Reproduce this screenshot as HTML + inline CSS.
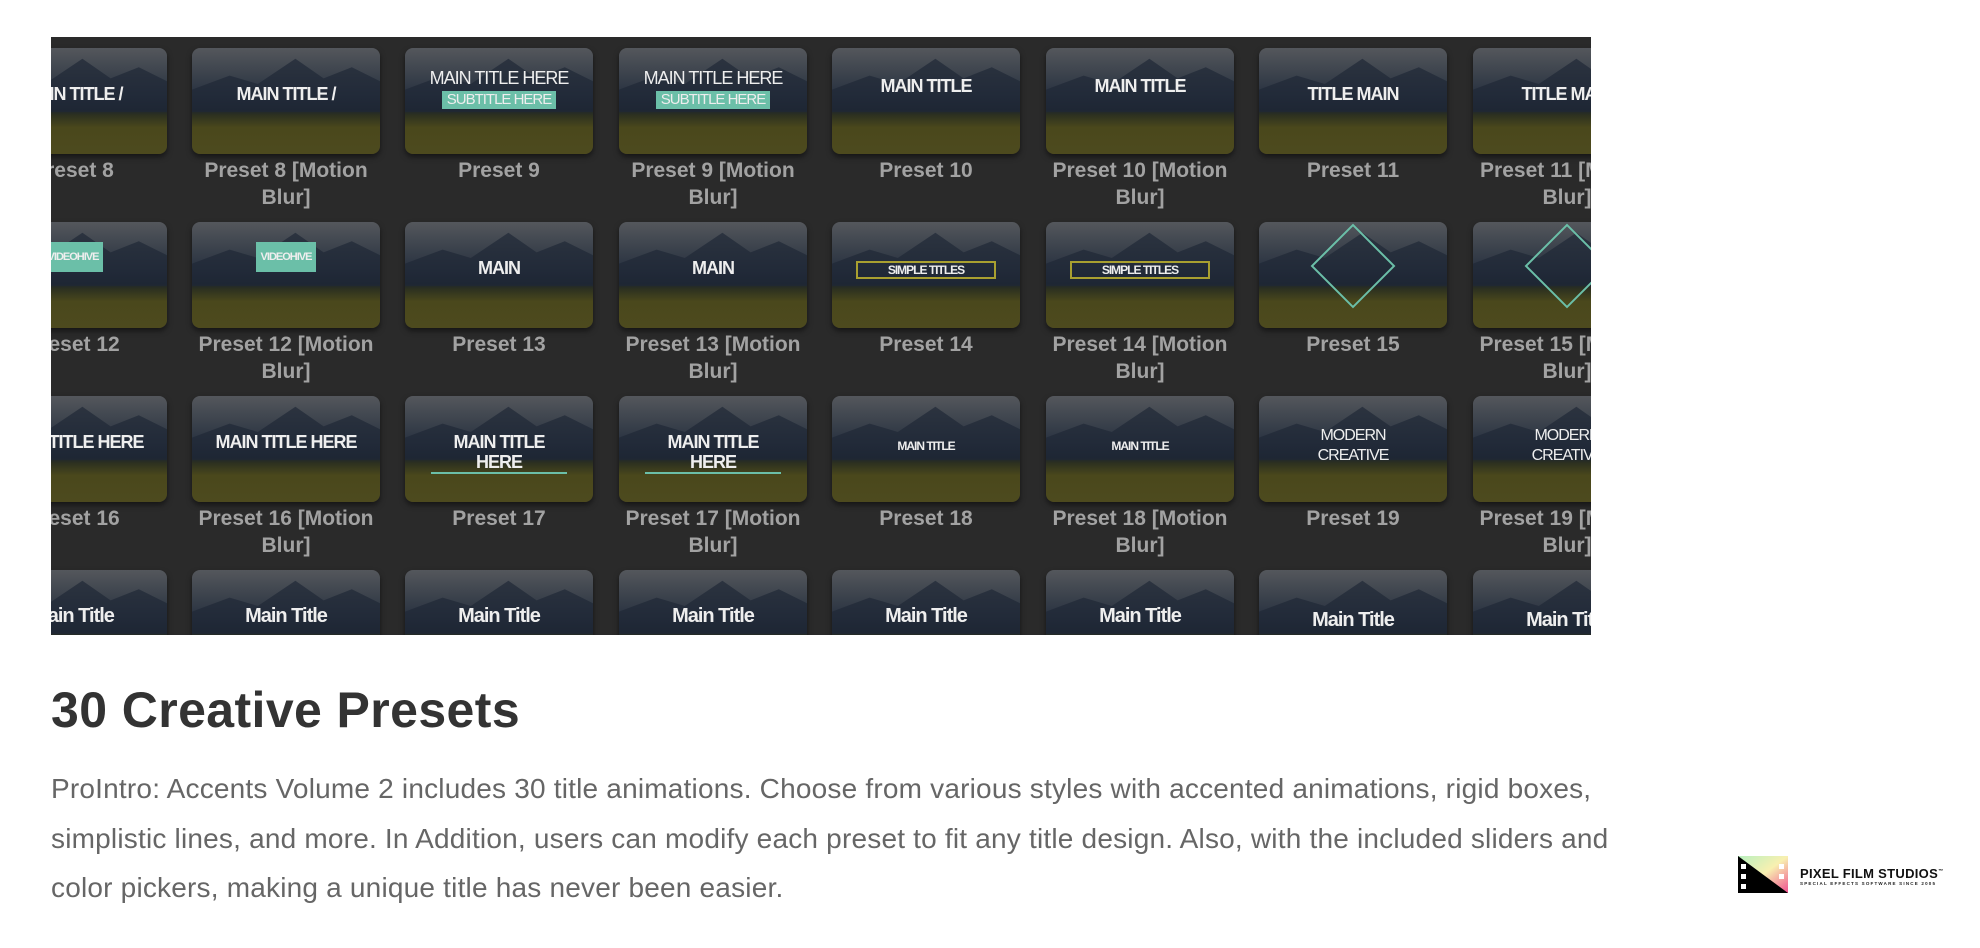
<!DOCTYPE html>
<html><head><meta charset="utf-8"><style>
*{margin:0;padding:0;box-sizing:border-box}
body{width:1980px;height:948px;background:#fff;position:relative;overflow:hidden;font-family:"Liberation Sans",sans-serif}
#p{position:absolute;left:51px;top:37px;width:1540px;height:598px;background:#2a2a2a;overflow:hidden}
.t{position:absolute;width:188px;height:106px;border-radius:8px;overflow:hidden;box-shadow:0 3px 6px rgba(0,0,0,.5);
background:linear-gradient(180deg,#54575c 0%,#3b424c 25%,#283140 45%,#1c2430 58%,#2c3020 63%,#4a481c 75%,#4d4a1e 100%)}
.t:before{content:"";position:absolute;left:0;top:8px;width:100%;height:56px;background:#1f2836;opacity:.7;clip-path:polygon(0 60%,20% 35%,35% 50%,55% 5%,70% 40%,85% 20%,100% 45%,100% 100%,0 100%)}
.o{position:absolute;left:0;width:100%;top:36px;text-align:center;color:#eee;font-weight:bold;font-size:18px;letter-spacing:-1px;z-index:2;line-height:20px}
.s{display:inline-block;background:#6bbfa8;color:#eee;font-size:15px;padding:0 5px;line-height:18px}
.l{position:absolute;width:188px;text-align:center;color:#a2a2a2;font-weight:bold;font-size:21px;line-height:27px}
h1{position:absolute;left:51px;top:681px;font-size:50px;font-weight:bold;color:#333;letter-spacing:0.4px;white-space:nowrap}
.para{position:absolute;left:51px;top:764px;font-size:28px;line-height:49.5px;color:#666;white-space:nowrap;letter-spacing:0.2px}
</style></head><body>
<div id="p">
<div class="t" style="left:-72px;top:11px"><div class="o">MAIN TITLE /</div></div>
<div class="t" style="left:141px;top:11px"><div class="o">MAIN TITLE /</div></div>
<div class="t" style="left:354px;top:11px"><div class="o" style="top:20px;font-weight:normal">MAIN TITLE HERE<br><span class="s">SUBTITLE HERE</span></div></div>
<div class="t" style="left:568px;top:11px"><div class="o" style="top:20px;font-weight:normal">MAIN TITLE HERE<br><span class="s">SUBTITLE HERE</span></div></div>
<div class="t" style="left:781px;top:11px"><div class="o" style="top:28px">MAIN TITLE</div></div>
<div class="t" style="left:995px;top:11px"><div class="o" style="top:28px">MAIN TITLE</div></div>
<div class="t" style="left:1208px;top:11px"><div class="o">TITLE MAIN</div></div>
<div class="t" style="left:1422px;top:11px"><div class="o">TITLE MAIN</div></div>
<div class="l" style="left:-72px;top:120px">Preset 8</div>
<div class="l" style="left:141px;top:120px">Preset 8 [Motion<br>Blur]</div>
<div class="l" style="left:354px;top:120px">Preset 9</div>
<div class="l" style="left:568px;top:120px">Preset 9 [Motion<br>Blur]</div>
<div class="l" style="left:781px;top:120px">Preset 10</div>
<div class="l" style="left:995px;top:120px">Preset 10 [Motion<br>Blur]</div>
<div class="l" style="left:1208px;top:120px">Preset 11</div>
<div class="l" style="left:1422px;top:120px">Preset 11 [Motion<br>Blur]</div>
<div class="t" style="left:-72px;top:185px"><div class="o" style="top:20px;font-size:12px"><span class="s" style="font-size:11px;line-height:30px">VIDEOHIVE</span></div></div>
<div class="t" style="left:141px;top:185px"><div class="o" style="top:20px;font-size:12px"><span class="s" style="font-size:11px;line-height:30px">VIDEOHIVE</span></div></div>
<div class="t" style="left:354px;top:185px"><div class="o">MAIN</div></div>
<div class="t" style="left:568px;top:185px"><div class="o">MAIN</div></div>
<div class="t" style="left:781px;top:185px"><div class="o" style="font-size:12px;top:38px"><span style="border:2px solid #a9a030;padding:0 30px">SIMPLE TITLES</span></div></div>
<div class="t" style="left:995px;top:185px"><div class="o" style="font-size:12px;top:38px"><span style="border:2px solid #a9a030;padding:0 30px">SIMPLE TITLES</span></div></div>
<div class="t" style="left:1208px;top:185px"><div style="position:absolute;left:64px;top:14px;width:60px;height:60px;border:2px solid #6bbfa8;transform:rotate(45deg);z-index:2"></div></div>
<div class="t" style="left:1422px;top:185px"><div style="position:absolute;left:64px;top:14px;width:60px;height:60px;border:2px solid #6bbfa8;transform:rotate(45deg);z-index:2"></div></div>
<div class="l" style="left:-72px;top:294px">Preset 12</div>
<div class="l" style="left:141px;top:294px">Preset 12 [Motion<br>Blur]</div>
<div class="l" style="left:354px;top:294px">Preset 13</div>
<div class="l" style="left:568px;top:294px">Preset 13 [Motion<br>Blur]</div>
<div class="l" style="left:781px;top:294px">Preset 14</div>
<div class="l" style="left:995px;top:294px">Preset 14 [Motion<br>Blur]</div>
<div class="l" style="left:1208px;top:294px">Preset 15</div>
<div class="l" style="left:1422px;top:294px">Preset 15 [Motion<br>Blur]</div>
<div class="t" style="left:-72px;top:359px"><div class="o">MAIN TITLE HERE</div></div>
<div class="t" style="left:141px;top:359px"><div class="o">MAIN TITLE HERE</div></div>
<div class="t" style="left:354px;top:359px"><div class="o" style="border-bottom:2px solid #6bbfa8;margin:0 26px;width:auto">MAIN TITLE HERE</div></div>
<div class="t" style="left:568px;top:359px"><div class="o" style="border-bottom:2px solid #6bbfa8;margin:0 26px;width:auto">MAIN TITLE HERE</div></div>
<div class="t" style="left:781px;top:359px"><div class="o" style="font-size:12px;top:40px">MAIN TITLE</div></div>
<div class="t" style="left:995px;top:359px"><div class="o" style="font-size:12px;top:40px">MAIN TITLE</div></div>
<div class="t" style="left:1208px;top:359px"><div class="o" style="top:30px;font-size:16px;font-weight:normal">MODERN<br>CREATIVE</div></div>
<div class="t" style="left:1422px;top:359px"><div class="o" style="top:30px;font-size:16px;font-weight:normal">MODERN<br>CREATIVE</div></div>
<div class="l" style="left:-72px;top:468px">Preset 16</div>
<div class="l" style="left:141px;top:468px">Preset 16 [Motion<br>Blur]</div>
<div class="l" style="left:354px;top:468px">Preset 17</div>
<div class="l" style="left:568px;top:468px">Preset 17 [Motion<br>Blur]</div>
<div class="l" style="left:781px;top:468px">Preset 18</div>
<div class="l" style="left:995px;top:468px">Preset 18 [Motion<br>Blur]</div>
<div class="l" style="left:1208px;top:468px">Preset 19</div>
<div class="l" style="left:1422px;top:468px">Preset 19 [Motion<br>Blur]</div>
<div class="t" style="left:-72px;top:533px"><div class="o" style="font-size:20px">Main Title</div></div>
<div class="t" style="left:141px;top:533px"><div class="o" style="font-size:20px">Main Title</div></div>
<div class="t" style="left:354px;top:533px"><div class="o" style="font-size:20px">Main Title</div></div>
<div class="t" style="left:568px;top:533px"><div class="o" style="font-size:20px">Main Title</div></div>
<div class="t" style="left:781px;top:533px"><div class="o" style="font-size:20px">Main Title</div></div>
<div class="t" style="left:995px;top:533px"><div class="o" style="font-size:20px">Main Title</div></div>
<div class="t" style="left:1208px;top:533px"><div class="o" style="font-size:20px;top:40px">Main Title</div></div>
<div class="t" style="left:1422px;top:533px"><div class="o" style="font-size:20px;top:40px">Main Title</div></div>
</div>
<h1>30 Creative Presets</h1>
<div class="para">ProIntro: Accents Volume 2 includes 30 title animations. Choose from various styles with accented animations, rigid boxes,<br>simplistic lines, and more. In Addition, users can modify each preset to fit any title design. Also, with the included sliders and<br>color pickers, making a unique title has never been easier.</div>
<svg style="position:absolute;left:1738px;top:856px" width="52" height="38" viewBox="0 0 52 38">
<defs><linearGradient id="g" x1="0" y1="0" x2="1" y2="1"><stop offset="0" stop-color="#b8f0c0"/><stop offset=".5" stop-color="#f8f0b0"/><stop offset="1" stop-color="#f05090"/></linearGradient></defs>
<rect x="0" y="0" width="50" height="37" fill="url(#g)"/>
<polygon points="0,0 50,37 0,37" fill="#000"/>
<rect x="3" y="8" width="5" height="5" fill="#fff"/><rect x="3" y="18" width="5" height="5" fill="#fff"/><rect x="3" y="28" width="5" height="5" fill="#fff"/>
<rect x="41" y="8" width="5" height="5" fill="#fff"/><rect x="41" y="18" width="5" height="5" fill="#fff"/>
</svg>
<div style="position:absolute;left:1800px;top:866px;font-size:13px;font-weight:bold;color:#111;letter-spacing:0.3px;white-space:nowrap">PIXEL FILM STUDIOS<sup style="font-size:5px">™</sup></div>
<div style="position:absolute;left:1800px;top:881px;font-size:4.5px;font-weight:bold;color:#222;letter-spacing:1.2px;white-space:nowrap">SPECIAL EFFECTS SOFTWARE SINCE 2005</div>
</body></html>
